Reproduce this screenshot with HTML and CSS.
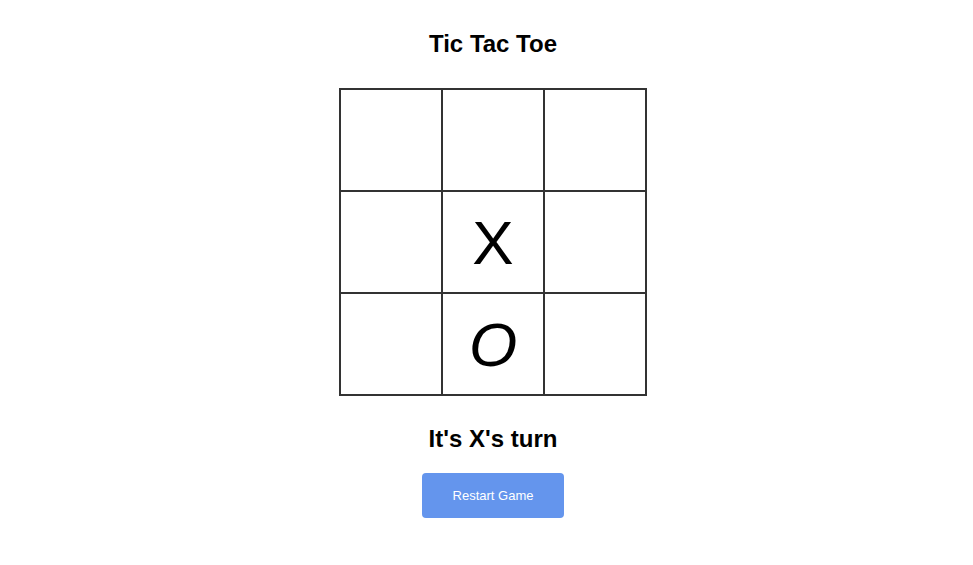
FILE: index.html
```html
<!DOCTYPE html>
<html>
<head>
<meta charset="utf-8">
<link rel="stylesheet" href="styles.css">
</head>
<body>
<div class="app">
  <h1 class="title">Tic Tac Toe</h1>
  <div class="board">
    <div class="cell"></div>
    <div class="cell"></div>
    <div class="cell"></div>
    <div class="cell"></div>
    <div class="cell mark-x">X</div>
    <div class="cell"></div>
    <div class="cell"></div>
    <div class="cell mark-o">O</div>
    <div class="cell"></div>
  </div>
  <h2 class="status">It's X's turn</h2>
  <button class="restart">Restart Game</button>
</div>
</body>
</html>
```
FILE: styles.css
```css
html, body {
  margin: 0;
  padding: 0;
  background: #ffffff;
}
body {
  font-family: "Liberation Sans", Arial, sans-serif;
  color: #000;
}
.app {
  display: flex;
  flex-direction: column;
  align-items: center;
  padding: 30px 0 0 13px;
}
.title {
  margin: 0;
  font-size: 24px;
  line-height: 28px;
  font-weight: bold;
}
.board {
  margin-top: 30px;
  display: grid;
  grid-template-columns: repeat(3, 102px);
  grid-template-rows: repeat(3, 102px);
  border: 1px solid #333;
}
.cell {
  box-sizing: border-box;
  border: 1px solid #333;
  display: flex;
  align-items: center;
  justify-content: center;
  font-family: "Liberation Sans", sans-serif;
  font-size: 62px;
  line-height: 1;
}
.mark-x {
  padding-top: 2px;
}
.mark-o {
  font-style: italic;
  padding-top: 2px;
}
.status {
  margin: 29px 0 0;
  font-size: 24px;
  line-height: 28px;
  font-weight: bold;
}
.restart {
  margin-top: 20px;
  width: 142px;
  height: 45px;
  border: none;
  border-radius: 4px;
  background: #6495ed;
  color: #fff;
  font-family: "Liberation Sans", Arial, sans-serif;
  font-size: 13px;
  padding: 0;
}
```
